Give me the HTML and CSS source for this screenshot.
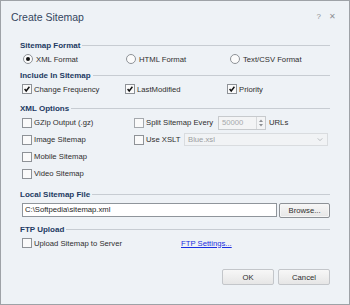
FILE: index.html
```html
<!DOCTYPE html>
<html lang="en">
<head>
    <meta charset="UTF-8">
    <title>Create Sitemap</title>
    <link rel="stylesheet" href="styles.css">
</head>
<body>
<div class="dialog">
    <div class="titlebar">
        <span class="title">Create Sitemap</span>
        <span class="winBtns"><span>?</span><span class="close">&#x2715;</span></span>
    </div>
    <div class="content">
        <!-- 格式 -->
        <div class="groupTitle g1"><span>Sitemap Format</span></div>
        <div class="formatRow">
            <label class="opt"><span class="radio checked"></span>XML Format</label>
            <label class="opt"><span class="radio"></span>HTML Format</label>
            <label class="opt"><span class="radio"></span>Text/CSV Format</label>
        </div>

        <div class="groupTitle g2"><span>Include In Sitemap</span></div>
        <div class="includeRow">
            <label class="opt"><span class="box"><svg viewBox="0 0 10 10"><path d="M2 5 L4 7.5 L8 2.2"/></svg></span>Change Frequency</label>
            <label class="opt"><span class="box"><svg viewBox="0 0 10 10"><path d="M2 5 L4 7.5 L8 2.2"/></svg></span>LastModified</label>
            <label class="opt"><span class="box"><svg viewBox="0 0 10 10"><path d="M2 5 L4 7.5 L8 2.2"/></svg></span>Priority</label>
        </div>

        <div class="groupTitle g3"><span>XML Options</span></div>
        <div class="xmlGrid">
            <label class="opt"><span class="box"></span>GZip Output (.gz)</label>
            <div class="splitCell">
                <label class="opt dim"><span class="box"></span>Split Sitemap Every</label>
                <div class="spinner">
                    <span class="spinVal">50000</span>
                    <span class="spinArrows">
                        <svg viewBox="0 0 8 12"><path d="M2 5 L4 2.5 L6 5 Z M2 7 L4 9.5 L6 7 Z"/></svg>
                    </span>
                </div>
                <span class="urls">URLs</span>
            </div>
            <label class="opt"><span class="box"></span>Image Sitemap</label>
            <div class="xsltCell">
                <label class="opt"><span class="box"></span>Use XSLT</label>
                <div class="combo">
                    <span>Blue.xsl</span>
                    <svg viewBox="0 0 8 6"><path d="M1 1.5 L4 4.5 L7 1.5"/></svg>
                </div>
            </div>
            <label class="opt"><span class="box"></span>Mobile Sitemap</label>
            <div></div>
            <label class="opt"><span class="box"></span>Video Sitemap</label>
            <div></div>
        </div>

        <div class="groupTitle g4"><span>Local Sitemap File</span></div>
        <div class="fileRow">
            <div class="fileInput">C:\Softpedia\sitemap.xml</div>
            <button class="btn browse">Browse...</button>
        </div>

        <div class="groupTitle g5"><span>FTP Upload</span></div>
        <div class="ftpRow">
            <label class="opt"><span class="box"></span>Upload Sitemap to Server</label>
            <a class="link" href="#">FTP Settings...</a>
        </div>

        <div class="footer">
            <button class="btn ok">OK</button>
            <button class="btn">Cancel</button>
        </div>
    </div>
</div>
</body>
</html>
```
FILE: styles.css
```css
*{
    margin: 0;
    padding: 0;
    box-sizing: border-box;
}
body
{
    font-family: "Liberation Sans", Arial, sans-serif;
    font-size: 7.7px;
    color: #2e2e2e;
    background: #ffffff;
}
.dialog
{
    width: 350px;
    height: 305px;
    border: 1px solid #9ea2a7;
    background: #eef2f6;
    display: flex;
    flex-direction: column;
}
.titlebar
{
    height: 38px;
    padding: 9px 13px 0 10px;
    display: flex;
    justify-content: space-between;
    align-items: flex-start;
}
.title
{
    font-size: 10.5px;
    line-height: 14px;
    color: #34465e;
}
.winBtns
{
    display: flex;
    gap: 8px;
    color: #8d9094;
    font-size: 8px;
    line-height: 14px;
}
.close
{
    font-size: 7.5px;
}
.content
{
    padding: 0 19px;
    display: flex;
    flex-direction: column;
}
/* 分组标题带横线 */
.groupTitle
{
    height: 12px;
    display: flex;
    align-items: center;
    gap: 2px;
    font-size: 8px;
    font-weight: bold;
    color: #1d3a63;
}
.groupTitle::after
{
    content: "";
    flex: 1;
    height: 1px;
    background: #c7ccd2;
}
.g2{ margin-top: 3px; }
.g3{ margin-top: 6px; }
.g4{ margin-top: 6px; }
.g5{ margin-top: 6px; }
.opt
{
    display: flex;
    align-items: center;
    gap: 2px;
    white-space: nowrap;
}
.radio
{
    width: 10px;
    height: 10px;
    border: 1px solid #8e9297;
    border-radius: 50%;
    background: #fbfbfb;
    display: flex;
    align-items: center;
    justify-content: center;
    margin-right: 1px;
}
.radio.checked::after
{
    content: "";
    width: 4px;
    height: 4px;
    border-radius: 50%;
    background: #111111;
}
.box
{
    width: 10px;
    height: 10px;
    border: 1px solid #8e9297;
    background: #fafafa;
    display: flex;
    align-items: center;
    justify-content: center;
}
.box svg
{
    width: 8px;
    height: 8px;
}
.box path
{
    fill: none;
    stroke: #111111;
    stroke-width: 1.8;
}
.formatRow
{
    margin-top: 1px;
    height: 14px;
    padding-left: 3px;
    display: grid;
    grid-template-columns: 103px 104px auto;
    align-items: center;
}
.includeRow
{
    margin-top: 1px;
    height: 14px;
    padding-left: 2px;
    display: grid;
    grid-template-columns: 103px 102px auto;
    align-items: center;
}
.xmlGrid
{
    padding-left: 2px;
    display: grid;
    grid-template-columns: 112px 1fr;
    grid-auto-rows: 17px;
    align-items: center;
}
.splitCell
{
    display: flex;
    align-items: center;
}
.splitCell .opt
{
    width: 84px;
}
.dim .box
{
    border-color: #a4a8ad;
}
.spinner
{
    width: 48px;
    height: 14px;
    border: 1px solid #c7cacd;
    background: #f3f4f5;
    display: flex;
    align-items: center;
    justify-content: space-between;
    padding-left: 3px;
}
.spinVal
{
    color: #a7a9ac;
}
.spinArrows
{
    width: 9px;
    height: 12px;
    border-left: 1px solid #d6d8da;
    display: flex;
}
.spinArrows svg
{
    width: 8px;
    height: 12px;
}
.spinArrows path
{
    fill: #8d9094;
}
.urls
{
    margin-left: 3px;
}
.xsltCell
{
    display: flex;
    align-items: center;
    padding-right: 2px;
}
.xsltCell .opt
{
    width: 50px;
}
.combo
{
    flex: 1;
    height: 13px;
    border: 1px solid #d9dcdf;
    background: #f1f3f5;
    display: flex;
    align-items: center;
    justify-content: space-between;
    padding: 0 4px 0 3px;
    color: #9b9ea1;
}
.combo svg
{
    width: 6px;
    height: 5px;
}
.combo path
{
    fill: none;
    stroke: #a6a9ad;
    stroke-width: 1;
}
.fileRow
{
    margin-top: 3px;
    padding-left: 2px;
    height: 14px;
    display: flex;
    gap: 2px;
}
.fileInput
{
    width: 256px;
    height: 14px;
    border: 1px solid #8f959b;
    background: #ffffff;
    padding-left: 2px;
    line-height: 12px;
    color: #1e1e1e;
}
.btn
{
    font-family: "Liberation Sans", Arial, sans-serif;
    font-size: 7.7px;
    color: #2e2e2e;
    border: 1px solid #c3c6ca;
    border-radius: 2px;
    background: linear-gradient(#f7f7f7, #e6e6e6);
}
.browse
{
    width: 51px;
    height: 15px;
    border-color: #8d9196;
    box-shadow: inset 0 0 0 1px #f6f6f6;
}
.ftpRow
{
    margin-top: 1px;
    height: 14px;
    padding-left: 2px;
    display: grid;
    grid-template-columns: 159px auto;
    align-items: center;
}
.link
{
    color: #1a2fe0;
    text-decoration: underline;
}
.footer
{
    margin-top: 19px;
    display: flex;
    justify-content: flex-end;
    gap: 4px;
}
.footer .btn
{
    width: 52px;
    height: 16px;
}
```
